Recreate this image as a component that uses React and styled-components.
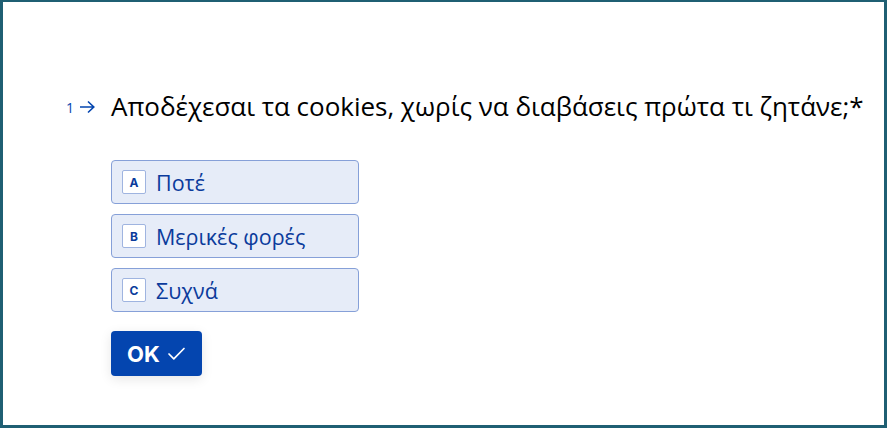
import React from "react";
import styled, { createGlobalStyle } from "styled-components";

const Global = createGlobalStyle`
  html, body { margin: 0; padding: 0; background: #ffffff; }
  * { box-sizing: border-box; }
`;

const Frame = styled.div`
  width: 887px;
  height: 428px;
  border-style: solid;
  border-color: #1f5f73;
  border-width: 2px 3px 3px 3px;
  background: #ffffff;
  font-family: "Open Sans", "Noto Sans", sans-serif;
  padding: 86px 0 0 63px;
`;

const QuestionRow = styled.div`
  display: flex;
  align-items: center;
`;

const Counter = styled.div`
  width: 45px;
  display: flex;
  align-items: center;
  gap: 5px;
  color: #0445af;
  font-size: 14px;
  padding-top: 2px;
`;

const Question = styled.h1`
  margin: 0;
  font-weight: 400;
  font-size: 26px;
  line-height: 36px;
  color: #000000;
  letter-spacing: -0.02px;
`;

const Options = styled.div`
  display: flex;
  flex-direction: column;
  gap: 10px;
  margin: 36px 0 0 45px;
  width: 248px;
`;

const Option = styled.div`
  height: 44px;
  display: flex;
  align-items: center;
  gap: 10px;
  padding: 0 10px;
  border: 1px solid #86a0d8;
  border-radius: 4px;
  background: #e6ecf8;
  color: #0b3b9c;
  font-size: 21.5px;
`;

const Key = styled.span`
  width: 24px;
  height: 24px;
  flex: none;
  display: flex;
  align-items: center;
  justify-content: center;
  background: #ffffff;
  border: 1px solid #9fb4e0;
  border-radius: 2px;
  font-size: 12px;
  font-weight: 700;
  color: #0b3b9c;
  font-family: "Inter", "Open Sans", sans-serif;
`;

const OkButton = styled.button`
  margin: 19px 0 0 45px;
  width: 91px;
  height: 45px;
  display: flex;
  align-items: center;
  justify-content: center;
  gap: 7px;
  border: none;
  border-radius: 4px;
  background: #0445af;
  color: #ffffff;
  font-family: "Inter", "Open Sans", sans-serif;
  font-weight: 700;
  font-size: 22px;
  box-shadow: 0 3px 12px rgba(0, 0, 0, 0.1);
  padding: 0;
`;

const Arrow = () => (
  <svg width="17" height="14" viewBox="0 0 17 14" fill="none" stroke="#0445af" strokeWidth="1.6">
    <path d="M1 7h14M9 1.5 14.8 7 9 12.5" />
  </svg>
);

const Check = () => (
  <svg width="19" height="15" viewBox="0 0 19 15" fill="none" stroke="#ffffff" strokeWidth="1.7" strokeLinecap="round" strokeLinejoin="round">
    <path d="M2 8l4.8 4.8L17 2.5" />
  </svg>
);

const options = [
  { key: "A", label: "Ποτέ" },
  { key: "B", label: "Μερικές φορές" },
  { key: "C", label: "Συχνά" },
];

export default function App() {
  return (
    <>
      <Global />
      <Frame>
        <QuestionRow>
          <Counter>
            <span>1</span>
            <Arrow />
          </Counter>
          <Question>Αποδέχεσαι τα cookies, χωρίς να διαβάσεις πρώτα τι ζητάνε;*</Question>
        </QuestionRow>
        <Options>
          {options.map((o) => (
            <Option key={o.key}>
              <Key>{o.key}</Key>
              <span>{o.label}</span>
            </Option>
          ))}
        </Options>
        <OkButton>
          OK <Check />
        </OkButton>
      </Frame>
    </>
  );
}
